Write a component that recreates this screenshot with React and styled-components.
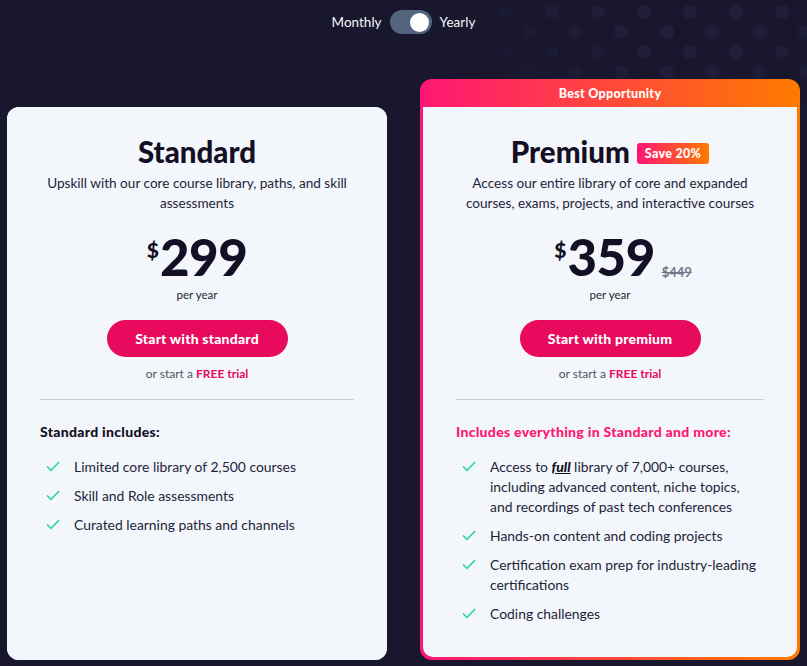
import React from 'react';
import styled, { createGlobalStyle } from 'styled-components';

const GlobalStyle = createGlobalStyle`
  html, body {
    margin: 0;
    background: #18172e;
  }
  body {
    font-family: Lato, "Noto Sans", sans-serif;
    -webkit-font-smoothing: antialiased;
  }
`;

const Page = styled.div`
  position: relative;
  min-height: 666px;
  padding: 10px 7px 0;
  box-sizing: border-box;
  overflow: hidden;

  &::before {
    content: '';
    position: absolute;
    top: -8px;
    right: -10px;
    width: 380px;
    height: 200px;
    background-image:
      radial-gradient(circle, #201e3a 6.5px, transparent 7.5px),
      radial-gradient(circle, #201e3a 6.5px, transparent 7.5px);
    background-size: 46px 40px;
    background-position: 0 0, 23px 20px;
    -webkit-mask-image: radial-gradient(ellipse at 70% 0%, #000 25%, transparent 70%);
    mask-image: radial-gradient(ellipse at 70% 0%, #000 25%, transparent 70%);
    pointer-events: none;
  }
`;

const ToggleRow = styled.div`
  position: relative;
  display: flex;
  justify-content: center;
  align-items: center;
  gap: 8px;
  color: #f3f6fa;
  font-size: 13.5px;
  height: 24px;
`;

const Track = styled.div`
  width: 42px;
  height: 24px;
  border-radius: 12px;
  background: #53647f;
  display: flex;
  align-items: center;
  justify-content: ${p => (p.$on ? 'flex-end' : 'flex-start')};
  padding: 0 3px;
  box-sizing: border-box;
`;

const Knob = styled.div`
  width: 19px;
  height: 19px;
  border-radius: 50%;
  background: #fff;
`;

const Cards = styled.div`
  position: relative;
  display: grid;
  grid-template-columns: 380px 380px;
  column-gap: 33px;
  margin-top: 45px;
  align-items: stretch;
`;

const Card = styled.div`
  background: #f3f6fa;
  border-radius: 12px;
  margin-top: 28px;
  display: flex;
  flex-direction: column;
`;

const Frame = styled.div`
  background: linear-gradient(90deg, #ff1675 0%, #ff7a00 100%);
  border-radius: 12px;
  padding: 0 3px 3px;
  display: flex;
  flex-direction: column;
`;

const Ribbon = styled.div`
  height: 28px;
  display: flex;
  align-items: center;
  justify-content: center;
  color: #fff;
  font-weight: 900;
  font-size: 12.5px;
  letter-spacing: 0.3px;
`;

const Body = styled.div`
  flex: 1;
  background: #f3f6fa;
  border-radius: ${p => (p.$flat ? '0 0 10px 10px' : '12px')};
  padding: 28px 33px 33px;
  display: flex;
  flex-direction: column;
  align-items: center;
  color: #130f25;
`;

const TitleRow = styled.div`
  display: flex;
  align-items: center;
  gap: 7px;
`;

const Title = styled.h2`
  margin: 0;
  font-size: 29.5px;
  line-height: 34px;
  font-weight: 900;
  color: #130f25;
`;

const Badge = styled.span`
  background: linear-gradient(90deg, #ff1675 0%, #ff7a00 100%);
  color: #fff;
  font-size: 12.5px;
  line-height: 14px;
  font-weight: 900;
  letter-spacing: 0.3px;
  padding: 4px 8px 3px;
  border-radius: 3px;
  margin-top: 2px;
`;

const Desc = styled.p`
  margin: 4px 0 0;
  font-size: 13.6px;
  line-height: 20px;
  text-align: center;
  color: #231f3a;
`;

const PriceRow = styled.div`
  position: relative;
  display: flex;
  align-items: flex-start;
  margin-top: 18px;
  margin-left: ${p => (p.$shift ? '-11px' : '0')};
  height: 52px;
`;

const Dollar = styled.span`
  font-size: 21px;
  font-weight: 900;
  margin-top: 6px;
  margin-right: 1px;
`;

const Amount = styled.span`
  font-size: 51px;
  line-height: 52px;
  font-weight: 900;
  letter-spacing: -0.5px;
`;

const Old = styled.span`
  position: absolute;
  left: 100%;
  bottom: 3px;
  margin-left: 7px;
  font-size: 13px;
  font-weight: 700;
  color: #6d7787;
  text-decoration: line-through;
`;

const Per = styled.div`
  margin-top: 5px;
  font-size: 11.5px;
  color: #231f3a;
`;

const Button = styled.button`
  margin-top: 19px;
  width: 181px;
  height: 37px;
  border: none;
  border-radius: 19px;
  background: #e80a5d;
  color: #fff;
  font-family: inherit;
  font-weight: 900;
  font-size: 14px;
  letter-spacing: 0.2px;
  cursor: pointer;
`;

const Trial = styled.div`
  margin-top: 9px;
  font-size: 12px;
  color: #4d5566;

  b {
    color: #e80a5d;
    font-weight: 700;
  }
`;

const Divider = styled.hr`
  align-self: stretch;
  border: none;
  border-top: 1px solid #c6cfdb;
  margin: 18px 0 0;
`;

const ListHead = styled.div`
  align-self: stretch;
  margin-top: 23px;
  font-size: 14px;
  font-weight: 900;
  letter-spacing: 0.3px;
  color: ${p => (p.$accent ? '#ff1675' : '#130f25')};
`;

const List = styled.ul`
  align-self: stretch;
  list-style: none;
  margin: 17px 0 0;
  padding: 0 0 0 6px;
  display: flex;
  flex-direction: column;
  gap: 9px;
`;

const Item = styled.li`
  display: flex;
  gap: 14px;
  font-size: 13.9px;
  line-height: 20px;
  color: #231f3a;

  svg {
    flex: none;
    margin-top: 4px;
  }

  i {
    font-weight: 900;
    text-decoration: underline;
    color: #130f25;
  }
`;

const Check = () => (
  <svg width="14" height="11" viewBox="0 0 14 11" fill="none">
    <polyline points="1,5.5 5,9.5 13,1" stroke="#1fd49c" strokeWidth="1.5" />
  </svg>
);

const plans = {
  standard: [
    'Limited core library of 2,500 courses',
    'Skill and Role assessments',
    'Curated learning paths and channels',
  ],
  premium: [
    <>Access to <i>full</i> library of 7,000+ courses, including advanced content, niche topics, and recordings of past tech conferences</>,
    'Hands-on content and coding projects',
    'Certification exam prep for industry-leading certifications',
    'Coding challenges',
  ],
};

const Features = ({ items }) => (
  <List>
    {items.map((t, i) => (
      <Item key={i}>
        <Check />
        <span>{t}</span>
      </Item>
    ))}
  </List>
);

const App = () => (
  <>
    <GlobalStyle />
    <Page>
      <ToggleRow>
        <span>Monthly</span>
        <Track $on>
          <Knob />
        </Track>
        <span>Yearly</span>
      </ToggleRow>

      <Cards>
        <Card>
          <Body>
            <Title>Standard</Title>
            <Desc>Upskill with our core course library, paths, and skill assessments</Desc>
            <PriceRow>
              <Dollar>$</Dollar>
              <Amount>299</Amount>
            </PriceRow>
            <Per>per year</Per>
            <Button>Start with standard</Button>
            <Trial>or start a <b>FREE trial</b></Trial>
            <Divider />
            <ListHead>Standard includes:</ListHead>
            <Features items={plans.standard} />
          </Body>
        </Card>

        <Frame>
          <Ribbon>Best Opportunity</Ribbon>
          <Body $flat>
            <TitleRow>
              <Title>Premium</Title>
              <Badge>Save 20%</Badge>
            </TitleRow>
            <Desc>Access our entire library of core and expanded courses, exams, projects, and interactive courses</Desc>
            <PriceRow $shift>
              <Dollar>$</Dollar>
              <Amount>359</Amount>
              <Old>$449</Old>
            </PriceRow>
            <Per>per year</Per>
            <Button>Start with premium</Button>
            <Trial>or start a <b>FREE trial</b></Trial>
            <Divider />
            <ListHead $accent>Includes everything in Standard and more:</ListHead>
            <Features items={plans.premium} />
          </Body>
        </Frame>
      </Cards>
    </Page>
  </>
);

export default App;
